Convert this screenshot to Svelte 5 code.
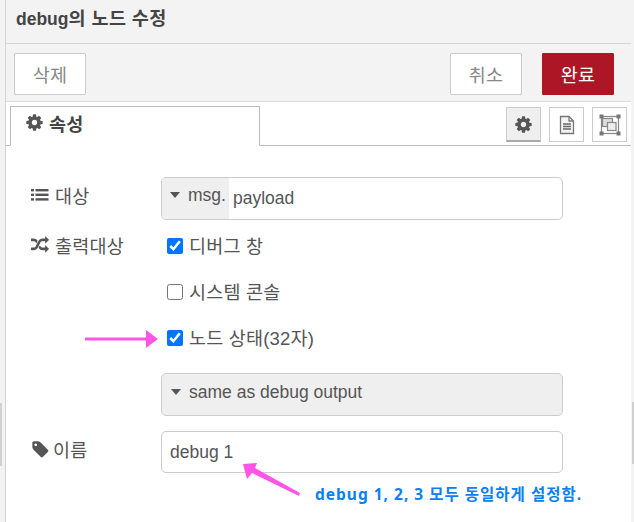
<script lang="ts">
  // FA4 glyph paths, 1792 box
  const COG = "M1152 896q0-106-75-181t-181-75-181 75-75 181 75 181 181 75 181-75 75-181zm512-109v222q0 12-8 23t-20 13l-185 28q-19 54-39 91 35 50 107 138 10 12 10 25t-9 23q-27 37-99 108t-94 71q-12 0-26-9l-138-108q-44 23-91 38-16 136-29 186-7 28-36 28h-222q-14 0-24.5-8.5t-11.5-21.5l-28-184q-49-16-90-37l-141 107q-10 9-25 9-14 0-25-11-126-114-165-168-7-10-7-23 0-12 8-23 15-21 51-66.5t54-70.5q-27-50-41-99l-183-27q-13-2-21-12.5t-8-23.5v-222q0-12 8-23t19-13l186-28q14-46 39-92-40-57-107-138-10-12-10-24 0-10 9-23 26-36 98.5-107.5t94.5-71.5q13 0 26 10l138 107q44-23 91-38 16-136 29-186 7-28 36-28h222q14 0 24.5 8.5t11.5 21.5l28 184q49 16 90 37l142-107q9-9 24-9 13 0 25 10 129 119 165 170 7 8 7 22 0 12-8 23-15 21-51 66.5t-54 70.5q26 50 41 98l183 28q13 2 21 12.5t8 23.5z";
  const RANDOM = "M666 481q-60 92-137 273-22-45-37-72.5t-40.5-63.5-51-56.5-63-35-81.5-14.5h-224q-14 0-23-9t-9-23v-192q0-14 9-23t23-9h224q250 0 410 225zm1126 799q0 14-9 23l-320 320q-9 9-23 9-13 0-22.5-9.5t-9.5-22.5v-192q-32 0-85 .5t-81 1-73-1-71-5-64-10.5-63-18.5-58-28.5-59-40-55-53.5-56-69.5q59-93 136-273 22 45 37 72.5t40.5 63.5 51 56.5 63 35 81.5 14.5h256v-192q0-14 9-23t23-9q12 0 24 10l319 319q9 9 9 23zm0-896q0 14-9 23l-320 320q-9 9-23 9-13 0-22.5-9.5t-9.5-22.5v-192h-256q-48 0-87 15t-69 45-51 61.5-45 77.5q-32 62-78 171-29 66-49.5 111t-54 105-64 100-74 83-90 68.5-106.5 42-128 16.5h-224q-14 0-23-9t-9-23v-192q0-14 9-23t23-9h224q48 0 87-15t69-45 51-61.5 45-77.5q32-62 78-171 29-66 49.5-111t54-105 64-100 74-83 90-68.5 106.5-42 128-16.5h256v-192q0-14 9-23t23-9q12 0 24 10l319 319q9 9 9 23z";
  const TAG = "M576 448q0-53-37.5-90.5t-90.5-37.5-90.5 37.5-37.5 90.5 37.5 90.5 90.5 37.5 90.5-37.5 37.5-90.5zm1067 576q0 53-37 90l-491 492q-39 37-91 37-53 0-90-37l-715-716q-38-37-64.5-101t-26.5-117v-416q0-52 38-90t90-38h416q53 0 117 26.5t102 64.5l715 714q37 39 37 91z";

  const targets = [
    { label: "디버그 창", checked: true },
    { label: "시스템 콘솔", checked: false },
    { label: "노드 상태(32자)", checked: true },
  ];
</script>

<div class="shell">
  <div class="edge-left"><div class="thumb-left"></div></div>
  <main class="tray">
    <header class="title">debug<span class="ko-title">의 노드 수정</span></header>

    <div class="actions">
      <button class="btn ko">삭제</button>
      <span class="spacer"></span>
      <button class="btn ko">취소</button>
      <button class="btn ko primary">완료</button>
    </div>

    <div class="tabs">
      <div class="tab">
        <svg class="ic tab-ic" viewBox="0 0 1792 1792"><path d={COG} /></svg>
        <span class="ko">속성</span>
      </div>
      <div class="tab-tools">
        <div class="tool active">
          <svg class="ic tool-cog" viewBox="0 0 1792 1792"><path d={COG} /></svg>
        </div>
        <div class="tool">
          <svg width="18" height="20" viewBox="0 0 18 20" fill="none" stroke="#777" stroke-width="1.3">
            <path d="M2.5 1.5h8.5l4.5 4.5v12.5h-13z" fill="#f4f4f4" />
            <path d="M11 1.5v4.5h4.5" />
            <path d="M5 9h8M5 11.5h8M5 14h8" stroke="#666" />
          </svg>
        </div>
        <div class="tool">
          <svg width="22" height="22" viewBox="0 0 22 22" fill="none" stroke="#888" stroke-width="1.2">
            <rect x="2.5" y="2.5" width="17" height="17" />
            <rect x="3.5" y="4.5" width="10" height="8" fill="#ddd" />
            <rect x="8.5" y="8.5" width="8.5" height="8" fill="#eee" />
            <g fill="#777" stroke="none">
              <rect x="0.5" y="0.5" width="4" height="4" />
              <rect x="17.5" y="0.5" width="4" height="4" />
              <rect x="0.5" y="17.5" width="4" height="4" />
              <rect x="17.5" y="17.5" width="4" height="4" />
            </g>
          </svg>
        </div>
      </div>
    </div>

    <form class="form">
      <div class="row row-target">
        <div class="lbl">
          <svg class="ic" width="18" height="14" viewBox="0 0 18 14">
            <g fill="#555">
              <rect x="0" y="1" width="3" height="2.4" /><rect x="4.5" y="1" width="13" height="2.4" />
              <rect x="0" y="5.6" width="3" height="2.4" /><rect x="4.5" y="5.6" width="13" height="2.4" />
              <rect x="0" y="10.2" width="3" height="2.4" /><rect x="4.5" y="10.2" width="13" height="2.4" />
            </g>
          </svg>
          <span class="ko">대상</span>
        </div>
        <div class="field typed">
          <div class="type-btn"><i class="caret"></i><span>msg.</span></div>
          <span class="typed-val">payload</span>
        </div>
      </div>

      <div class="row row-outputs">
        <div class="lbl lbl-out">
          <svg class="ic" width="18" height="18" viewBox="0 0 1792 1792"><path d={RANDOM} /></svg>
          <span class="ko">출력대상</span>
        </div>
        <div class="checks">
          {#each targets as t}
            <label class="check">
              <input type="checkbox" checked={t.checked} />
              <span class="ko">{t.label}</span>
            </label>
          {/each}
        </div>
      </div>

      <div class="row row-select">
        <div class="lbl"></div>
        <div class="field select"><i class="caret"></i><span>same as debug output</span></div>
      </div>

      <div class="row row-name">
        <div class="lbl lbl-name">
          <svg class="ic" width="19" height="19" viewBox="0 0 1792 1792"><path d={TAG} /></svg>
          <span class="ko">이름</span>
        </div>
        <div class="field name">debug 1</div>
      </div>
    </form>
  </main>
  <div class="edge-right"><div class="thumb"></div></div>

  <!-- annotations drawn over the screenshot -->
  <svg class="marks" width="634" height="522" viewBox="0 0 634 522">
    <g fill="#ff55e6" stroke="none">
      <rect x="85" y="337.5" width="62" height="3" />
      <path d="M146 330 L158 339 L146 348z" />
      <path d="M299 496 L300 493 L255 468 L257 463 L243 464 L247 479 L252 473z" />
    </g>
  </svg>
  <div class="note">debug 1, 2, 3 모두 동일하게 설정함.</div>
</div>

<style>
  :global(body) {
    margin: 0;
    background: #fff;
  }
  .shell {
    position: relative;
    display: flex;
    width: 634px;
    height: 522px;
    overflow: hidden;
    font-family: "Liberation Sans", "Noto Sans CJK KR", sans-serif;
    font-size: 17.5px;
    color: #555;
  }
  .ko {
    font-size: 18.5px;
    letter-spacing: 0.2px;
  }
  .ko-title {
    font-size: 18.5px;
    letter-spacing: 0.4px;
  }
  .edge-left {
    position: relative;
    width: 5px;
    flex: none;
    background: #f3f3f3;
    border-right: 1px solid #d4d4d4;
  }
  .thumb-left {
    position: absolute;
    top: 403px;
    left: 0;
    width: 2px;
    height: 63px;
    background: #d0d0d0;
  }
  .edge-right {
    width: 3px;
    flex: none;
    background: #f3f3f3;
    position: relative;
  }
  .thumb {
    position: absolute;
    top: 402px;
    right: 0;
    width: 2px;
    height: 62px;
    background: #d0d0d0;
  }
  .tray {
    flex: 1;
    min-width: 0;
  }

  .title {
    height: 44px;
    box-sizing: border-box;
    padding: 8px 0 0 10px;
    line-height: 22px;
    font-weight: 700;
    color: #444;
    background: #f3f3f3;
    border-bottom: 1px solid #d6d6d6;
  }

  .actions {
    display: flex;
    align-items: flex-start;
    gap: 20px;
    height: 58px;
    box-sizing: border-box;
    padding: 9px 17px 0 8px;
    background: #f3f3f3;
    border-bottom: 1px solid #dcdcdc;
  }
  .spacer {
    flex: 1;
  }
  .btn {
    width: 72px;
    height: 42px;
    padding: 0;
    font-family: inherit;
    color: #888;
    background: #fff;
    border: 1px solid #ccc;
    border-radius: 1px;
  }
  .btn.primary {
    color: #fff;
    background: #ad1625;
    border-color: #ad1625;
  }

  .tabs {
    display: flex;
    height: 44px;
    box-sizing: border-box;
    padding: 4px 4px 0 4px;
    border-bottom: 1px solid #bbb;
  }
  .tab {
    display: flex;
    align-items: center;
    gap: 5px;
    width: 250px;
    height: 40px;
    box-sizing: border-box;
    padding: 0 0 7px 14px;
    font-weight: 700;
    color: #444;
    background: #fff;
    border: 1px solid #bbb;
    border-bottom: 1px solid #fff;
  }
  .tab-ic {
    width: 19px;
    height: 19px;
    fill: #777;
  }
  .tab-tools {
    display: flex;
    margin-left: auto;
    margin-top: 1px;
    gap: 8px;
    height: 35px;
  }
  .tool {
    display: flex;
    align-items: center;
    justify-content: center;
    width: 35px;
    height: 35px;
    box-sizing: border-box;
    background: #fff;
    border: 1px solid #ccc;
  }
  .tool.active {
    background: #efefef;
    border-bottom: 2px solid #aaa;
  }
  .tool-cog {
    width: 19px;
    height: 19px;
    fill: #555;
  }
  .ic {
    flex: none;
    fill: #555;
  }

  .form {
    padding: 31px 0 0 25px;
  }
  .row {
    display: flex;
  }
  .lbl {
    display: flex;
    align-items: center;
    gap: 6px;
    width: 130px;
    height: 36px;
    flex: none;
  }
  .field {
    display: flex;
    align-items: center;
    width: 402px;
    height: 43px;
    box-sizing: border-box;
    background: #fff;
    border: 1px solid #ccc;
    border-radius: 5px;
  }
  .typed {
    overflow: hidden;
  }
  .type-btn {
    display: flex;
    align-items: center;
    align-self: stretch;
    gap: 8px;
    padding: 0 3px 8px 8px;
    margin-bottom: -1px;
    background: #efefef;
  }
  .typed-val {
    margin: 0 0 0 4px;
  }
  .caret {
    width: 0;
    height: 0;
    flex: none;
    border: 5.5px solid transparent;
    border-top: 6px solid #555;
    border-bottom: 0;
  }
  .checks {
    display: flex;
    flex-direction: column;
    margin-left: 6px;
  }
  .check {
    display: flex;
    align-items: center;
    gap: 6px;
    height: 46px;
  }
  .check input {
    width: 16px;
    height: 16px;
    margin: 0;
  }
  .check span {
    margin-bottom: 3px;
  }
  .row-outputs {
    margin-top: 3px;
  }
  .lbl-out {
    height: 44px;
  }
  .row-select {
    margin-top: 12px;
  }
  .select {
    gap: 8px;
    padding: 0 0 5px 9px;
    background: #efefef;
  }
  .row-name {
    margin-top: 15px;
  }
  .lbl-name {
    gap: 3px;
  }
  .name {
    padding-left: 8px;
    height: 42px;
  }

  .marks {
    position: absolute;
    inset: 0;
    pointer-events: none;
  }
  .note {
    position: absolute;
    left: 315px;
    top: 484px;
    font-family: "Noto Sans", "Noto Sans CJK KR", sans-serif;
    font-size: 15.5px;
    letter-spacing: 1px;
    line-height: 20px;
    font-weight: 700;
    color: #0b80f5;
    white-space: nowrap;
  }
</style>
